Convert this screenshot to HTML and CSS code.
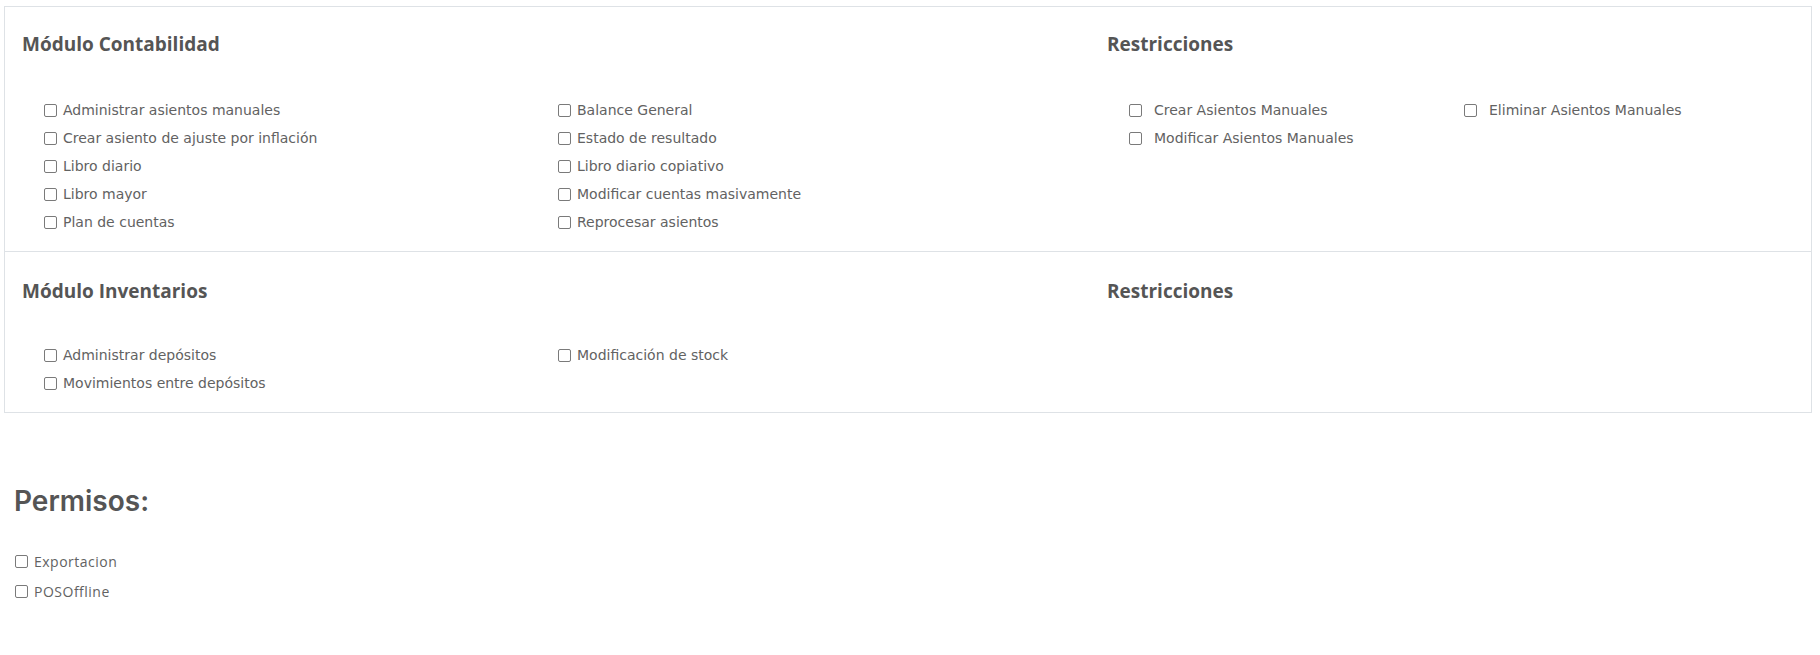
FILE: index.html
```html
<!DOCTYPE html>
<html>
<head>
    <title>Permisos de usuario</title>
    <link rel="stylesheet" href="styles.css">
</head>
<body>
    <div class="modules-card">
        <section class="module">
            <div class="module-main">
                <h4>Módulo Contabilidad</h4>
                <div class="perm-grid">
                    <label class="perm"><input type="checkbox">Administrar asientos manuales</label>
                    <label class="perm"><input type="checkbox">Balance General</label>
                    <label class="perm"><input type="checkbox">Crear asiento de ajuste por inflación</label>
                    <label class="perm"><input type="checkbox">Estado de resultado</label>
                    <label class="perm"><input type="checkbox">Libro diario</label>
                    <label class="perm"><input type="checkbox">Libro diario copiativo</label>
                    <label class="perm"><input type="checkbox">Libro mayor</label>
                    <label class="perm"><input type="checkbox">Modificar cuentas masivamente</label>
                    <label class="perm"><input type="checkbox">Plan de cuentas</label>
                    <label class="perm"><input type="checkbox">Reprocesar asientos</label>
                </div>
            </div>
            <div class="module-restrictions">
                <h4>Restricciones</h4>
                <div class="restriction-grid">
                    <label class="perm restriction"><input type="checkbox">Crear Asientos Manuales</label>
                    <label class="perm restriction"><input type="checkbox">Eliminar Asientos Manuales</label>
                    <label class="perm restriction"><input type="checkbox">Modificar Asientos Manuales</label>
                </div>
            </div>
        </section>

        <section class="module">
            <div class="module-main">
                <h4>Módulo Inventarios</h4>
                <div class="perm-grid">
                    <label class="perm"><input type="checkbox">Administrar depósitos</label>
                    <label class="perm"><input type="checkbox">Modificación de stock</label>
                    <label class="perm"><input type="checkbox">Movimientos entre depósitos</label>
                </div>
            </div>
            <div class="module-restrictions">
                <h4>Restricciones</h4>
            </div>
        </section>
    </div>

    <div class="extra-perms">
        <h3>Permisos:</h3>
        <label class="extra"><input type="checkbox">Exportacion</label>
        <label class="extra"><input type="checkbox">POSOffline</label>
    </div>
</body>
</html>
```

FILE: styles.css
```css
body {
    margin: 0;
    padding: 6px 8px 0 4px;
    background: white;
    font-family: "DejaVu Sans", Verdana, sans-serif;
    color: #555;
}
.modules-card {
    border: 1px solid #dee2e6;
}
.module {
    display: grid;
    grid-template-columns: 1084px 1fr;
    padding: 26px 0 15px 0;
}
.module + .module {
    border-top: 1px solid #dee2e6;
    padding-top: 28px;
}
.module + .module .perm-grid {
    margin-top: 39px;
}
.module-main {
    padding-left: 17px;
}
.module-restrictions {
    padding-left: 18px;
}
.module h4 {
    margin: 0;
    font-family: "Open Sans", sans-serif;
    font-weight: 700;
    font-size: 19px;
    line-height: 22px;
    color: #555;
}
.perm-grid {
    display: grid;
    grid-template-columns: 514px 514px;
    grid-auto-rows: 28px;
    margin-top: 41px;
    padding-left: 18px;
}
.restriction-grid {
    display: grid;
    grid-template-columns: 335px 335px;
    grid-auto-rows: 28px;
    margin-top: 41px;
    padding-left: 18px;
}
input[type="checkbox"] {
    appearance: none;
    -webkit-appearance: none;
    box-sizing: border-box;
    width: 13px;
    height: 13px;
    border: 1px solid #7a7a7a;
    border-radius: 2px;
    background: white;
    flex: none;
}
.perm {
    display: flex;
    align-items: center;
    font-size: 14px;
    color: #626262;
}
.perm input {
    margin: 0 6px 0 4px;
}
.restriction input {
    margin-right: 12px;
}
.extra-perms {
    padding: 72px 0 0 7px;
}
.extra-perms h3 {
    margin: 0 0 29px 0;
    font-family: Inter, sans-serif;
    font-weight: 600;
    font-size: 28px;
    line-height: 32px;
    color: #555;
    padding-left: 3px;
}
.extra {
    display: flex;
    align-items: center;
    height: 30px;
    font-family: "Open Sans", sans-serif;
    font-size: 14px;
    letter-spacing: 0.5px;
    color: #626262;
}
.extra input {
    margin: 0 6px 0 4px;
}
```
